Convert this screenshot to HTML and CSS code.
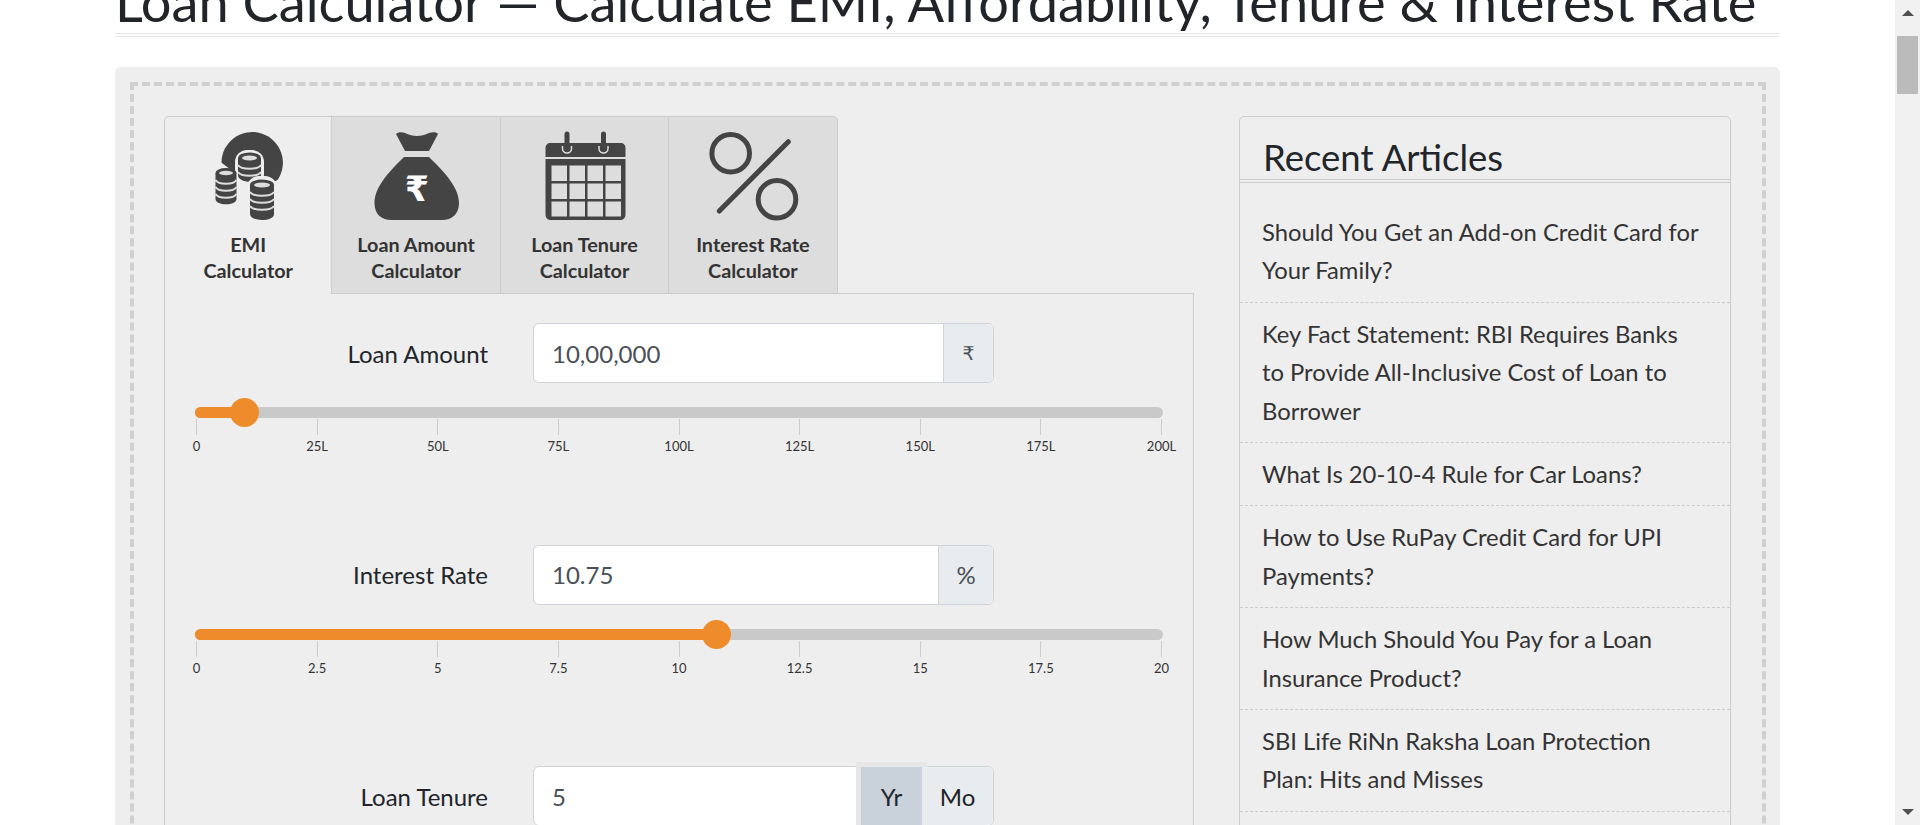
FILE: index.html
```html
<!DOCTYPE html>
<html lang="en">
<head>
    <meta charset="UTF-8">
    <meta name="viewport" content="width=device-width, initial-scale=1.0">
    <title>Loan Calculator</title>
    <link rel="stylesheet" href="styles.css">
</head>
<body>
    <main class="page">
        <div class="container">
            <div class="title-rule">
                <h1 class="page-title">Loan Calculator — Calculate EMI, Affordability, Tenure &amp; Interest Rate</h1>
            </div>

            <section class="panel">
                <div class="panel-inner">
                    <div class="calculator">
                        <ul class="tabs">
                            <li class="tab tab-active">
                                <svg class="tab-icon" viewBox="0 0 88 88">
                                    <path class="icon-fill" d="M17.5 30.7a30.7 30.7 0 1 1 56 17.4L60 55 30 40Z"/>
                                    <g class="coin-stack">
                                        <rect class="coin-halo" x="31" y="18" width="29" height="36" rx="12"/>
                                        <path class="icon-fill" d="M34 26v17c0 9 23 9 23 0V26Z"/>
                                        <ellipse class="icon-fill" cx="45.5" cy="26" rx="11.5" ry="5.5"/>
                                        <ellipse class="coin-top" cx="45.5" cy="26" rx="7.5" ry="2.5"/>
                                        <path class="coin-band" d="M34 33c3 5 20 5 23 0M34 40c3 5 20 5 23 0"/>
                                    </g>
                                    <g class="coin-stack">
                                        <path class="icon-fill" d="M11.5 41v26c0 7 21 7 21 0V41Z"/>
                                        <ellipse class="icon-fill" cx="22" cy="41" rx="10.5" ry="5"/>
                                        <ellipse class="coin-top" cx="22" cy="41" rx="7" ry="2.2"/>
                                        <path class="coin-band" d="M11.5 48c3 5 18 5 21 0M11.5 55c3 5 18 5 21 0M11.5 62c3 5 18 5 21 0"/>
                                    </g>
                                    <g class="coin-stack">
                                        <rect class="coin-halo" x="43" y="44" width="30" height="46" rx="12"/>
                                        <path class="icon-fill" d="M46 53v29c0 8 24 8 24 0V53Z"/>
                                        <ellipse class="icon-fill" cx="58" cy="53" rx="12" ry="5.5"/>
                                        <ellipse class="coin-top" cx="58" cy="53" rx="8" ry="2.4"/>
                                        <path class="coin-band" d="M46 60c3 5 21 5 24 0M46 67c3 5 21 5 24 0M46 74c3 5 21 5 24 0"/>
                                    </g>
                                </svg>
                                <span class="tab-label">EMI<br>Calculator</span>
                            </li>
                            <li class="tab">
                                <svg class="tab-icon" viewBox="0 0 88 88">
                                    <path class="icon-fill" d="M24 2c2-2 6-2 9-1 8 4 16 4 24 0 3-1 8-1 9 1l-9 17H33Z"/>
                                    <path class="icon-fill" d="M32 25h25c13 13 30 29 30 46 0 11-7 17-17 17H20C9 88 2.500 82 2.500 71 2.500 54 19 38 32 25Z"/>
                                    <text class="bag-rupee" x="45" y="69">₹</text>
                                </svg>
                                <span class="tab-label">Loan Amount<br>Calculator</span>
                            </li>
                            <li class="tab">
                                <svg class="tab-icon" viewBox="0 0 88 88">
                                    <path class="icon-fill" d="M5.500 25V16c0-3 2-5 5-5h70c3 0 5 2 5 5v9Z"/>
                                    <path class="icon-fill" fill-rule="evenodd" d="M5.500 27h80v55c0 4-2 6-6 6h-68c-4 0-6-2-6-6ZM11.500 33.500v15.500h15.500v-15.500ZM29.500 33.500v15.500h15.500v-15.500ZM47.500 33.500v15.500h15.500v-15.500ZM65.500 33.500v15.500h15.500v-15.500ZM11.500 51.500v15.500h15.500v-15.500ZM29.500 51.500v15.500h15.500v-15.500ZM47.500 51.500v15.500h15.500v-15.500ZM65.500 51.500v15.500h15.500v-15.500ZM11.500 69.500v15h15.500v-15ZM29.500 69.500v15h15.500v-15ZM47.500 69.500v15h15.500v-15ZM65.500 69.500v15h15.500v-15Z"/>
                                    <path class="ring" d="M22.500 14v2.500a4.500 4.500 0 0 0 9 0V14M59 14v2.500a4.500 4.500 0 0 0 9 0V14"/>
                                    <path class="ring-bar" d="M27 2v14M63.500 2v14"/>
                                </svg>
                                <span class="tab-label">Loan Tenure<br>Calculator</span>
                            </li>
                            <li class="tab">
                                <svg class="tab-icon" viewBox="0 0 88 88">
                                    <circle class="icon-line" cx="21.700" cy="21.300" r="18.800"/>
                                    <circle class="icon-line" cx="68" cy="67.300" r="18.800"/>
                                    <path class="icon-line" d="M79.300 9.700 10.300 79"/>
                                </svg>
                                <span class="tab-label">Interest Rate<br>Calculator</span>
                            </li>
                        </ul>

                        <div class="tab-body">
                            <div class="field">
                                <div class="field-line">
                                    <label class="field-label" for="loan-amount">Loan Amount</label>
                                    <div class="input-group">
                                        <input class="input-text" id="loan-amount" type="text" value="10,00,000">
                                        <span class="addon addon-rupee">₹</span>
                                    </div>
                                </div>
                                <div class="slider">
                                    <div class="track">
                                        <div class="track-fill" style="width: 5%"></div>
                                        <div class="handle" style="left: 5%"></div>
                                    </div>
                                    <div class="ticks">
                                        <span class="tick">0</span>
                                        <span class="tick">25L</span>
                                        <span class="tick">50L</span>
                                        <span class="tick">75L</span>
                                        <span class="tick">100L</span>
                                        <span class="tick">125L</span>
                                        <span class="tick">150L</span>
                                        <span class="tick">175L</span>
                                        <span class="tick">200L</span>
                                    </div>
                                </div>
                            </div>

                            <div class="field">
                                <div class="field-line">
                                    <label class="field-label" for="interest-rate">Interest Rate</label>
                                    <div class="input-group">
                                        <input class="input-text" id="interest-rate" type="text" value="10.75">
                                        <span class="addon addon-percent">%</span>
                                    </div>
                                </div>
                                <div class="slider">
                                    <div class="track">
                                        <div class="track-fill" style="width: 53.75%"></div>
                                        <div class="handle" style="left: 53.75%"></div>
                                    </div>
                                    <div class="ticks">
                                        <span class="tick">0</span>
                                        <span class="tick">2.5</span>
                                        <span class="tick">5</span>
                                        <span class="tick">7.5</span>
                                        <span class="tick">10</span>
                                        <span class="tick">12.5</span>
                                        <span class="tick">15</span>
                                        <span class="tick">17.5</span>
                                        <span class="tick">20</span>
                                    </div>
                                </div>
                            </div>

                            <div class="field">
                                <div class="field-line">
                                    <label class="field-label" for="loan-tenure">Loan Tenure</label>
                                    <div class="input-group">
                                        <input class="input-text" id="loan-tenure" type="text" value="5">
                                        <span class="addon addon-active">Yr</span>
                                        <span class="addon addon-month">Mo</span>
                                    </div>
                                </div>
                            </div>
                        </div>
                    </div>

                    <aside class="articles">
                        <div class="articles-rule">
                            <h3 class="articles-title">Recent Articles</h3>
                        </div>
                        <ul class="article-list">
                            <li class="article">Should You Get an Add-on Credit Card for Your Family?</li>
                            <li class="article">Key Fact Statement: RBI Requires Banks to Provide All-Inclusive Cost of Loan to Borrower</li>
                            <li class="article">What Is 20-10-4 Rule for Car Loans?</li>
                            <li class="article">How to Use RuPay Credit Card for UPI Payments?</li>
                            <li class="article">How Much Should You Pay for a Loan Insurance Product?</li>
                            <li class="article">SBI Life RiNn Raksha Loan Protection Plan: Hits and Misses</li>
                        </ul>
                    </aside>
                </div>
            </section>
        </div>
    </main>

    <div class="scrollbar">
        <span class="scroll-arrow-up"></span>
        <span class="scroll-thumb"></span>
        <span class="scroll-arrow-down"></span>
    </div>
</body>
</html>
```

FILE: styles.css
```css
* {
    box-sizing: border-box;
}
body {
    margin: 0;
    height: 825px;
    display: flex;
    overflow: hidden;
    font-family: Lato, "Noto Sans", sans-serif;
    color: #212529;
    background-color: #ffffff;
}
.page {
    flex: 1;
    height: 825px;
    overflow: hidden;
}
.container {
    width: 1665px;
    margin: 0 auto;
}

/* heading is cut off by the top of the window, page is scrolled */
.title-rule {
    margin-top: -36px;
    padding-bottom: 2px;
    border-bottom: 1px solid #e6e6e6;
}
.page-title {
    margin: 0;
    height: 70px;
    font-size: 54.2px;
    font-weight: 400;
    line-height: 75px;
    white-space: nowrap;
    border-bottom: 1px solid #e6e6e6;
}
.panel {
    margin-top: 30px;
    padding: 15px 14px 15px 15px;
    background-color: #eeeeee;
    border-radius: 6px;
}
.panel-inner {
    display: flex;
    gap: 45px;
    padding: 30px 30px 30px 30px;
    border: 4px dashed #d0d0d0;
}

/* tabs */
.calculator {
    width: 1030px;
}
.tabs {
    display: flex;
    margin: 0;
    padding: 0;
    list-style: none;
}
.tab {
    width: 168.4px;
    height: 178px;
    padding-top: 15px;
    text-align: center;
    background-color: #dddddd;
    border: 1px solid #cccccc;
    border-left: none;
}
.tab:last-child {
    border-top-right-radius: 5px;
}
.tab-active {
    background-color: #eeeeee;
    border-left: 1px solid #cccccc;
    border-bottom: none;
    border-top-left-radius: 5px;
}
.tab-icon {
    display: block;
    width: 88px;
    height: 88px;
    margin: 0 auto 11px;
    overflow: visible;
}
.tab-label {
    display: block;
    font-size: 19.8px;
    font-weight: 700;
    line-height: 26px;
    color: #333333;
}
.icon-fill {
    fill: #444444;
}
.icon-line {
    fill: none;
    stroke: #444444;
    stroke-width: 5;
    stroke-linecap: round;
}
.coin-halo {
    fill: #eeeeee;
}
.coin-top {
    fill: #dddddd;
}
.coin-band {
    fill: none;
    stroke: #dddddd;
    stroke-width: 2;
}
.bag-rupee {
    font-family: "DejaVu Sans", sans-serif;
    font-size: 35px;
    font-weight: 700;
    fill: #ffffff;
    text-anchor: middle;
}
.ring {
    fill: none;
    stroke: #dddddd;
    stroke-width: 1.5;
}
.ring-bar {
    fill: none;
    stroke: #444444;
    stroke-width: 5;
    stroke-linecap: round;
}

/* form */
.tab-body {
    margin-top: -1px;
    padding: 29px 30px 30px 30px;
    border: 1px solid #cccccc;
    border-bottom: none;
}
.field {
    height: 221.5px;
}
.field-line {
    display: flex;
    align-items: center;
}
.field-label {
    width: 293px;
    margin-right: 45px;
    font-size: 24px;
    text-align: right;
}
.input-group {
    display: flex;
    width: 461px;
    height: 60px;
    background-color: #ffffff;
    border: 1px solid #ced4da;
    border-radius: 6px;
}
.input-text {
    flex: 1;
    min-width: 0;
    padding: 0 18px;
    font-family: inherit;
    font-size: 24px;
    color: #495057;
    background: transparent;
    border: none;
    border-radius: 6px 0 0 6px;
}
.addon {
    display: flex;
    align-items: center;
    justify-content: center;
    font-size: 24px;
    color: #495057;
    background-color: #e9ecef;
    border-left: 1px solid #ced4da;
    border-radius: 0 6px 6px 0;
}
.addon-rupee {
    width: 50px;
    font-family: "DejaVu Sans", sans-serif;
    font-size: 19px;
}
.addon-percent {
    width: 55px;
}
.addon-active {
    width: 61px;
    color: #212529;
    background-color: #c9d2da;
    border-left: none;
    border-radius: 0;
    box-shadow: 0 0 0 5px #e6e6e6;
}
.addon-month {
    position: relative;
    width: 71px;
    color: #212529;
    border-left: none;
}

/* slider */
.slider {
    margin-top: 24px;
}
.track {
    position: relative;
    height: 11px;
    background-color: #c9c9c9;
    border-radius: 6px;
}
.track-fill {
    height: 100%;
    background-color: #ee8c2c;
    border-radius: 6px 0 0 6px;
}
.handle {
    position: absolute;
    top: -9px;
    width: 29px;
    height: 29px;
    margin-left: -13.5px;
    background-color: #ee8c2c;
    border-radius: 50%;
}
.ticks {
    display: flex;
    justify-content: space-between;
    padding: 0 1px;
}
.tick {
    display: flex;
    flex-direction: column;
    align-items: center;
    width: 1px;
    padding-top: 20px;
    position: relative;
    font-size: 13px;
    line-height: 16px;
    color: #333333;
    white-space: nowrap;
}
.tick::before {
    content: "";
    position: absolute;
    top: 1px;
    width: 1px;
    height: 16px;
    background-color: #cccccc;
}

/* sidebar */
.articles {
    width: 492px;
    background-color: #eeeeee;
    border: 1px solid #cccccc;
    border-radius: 5px;
}
.articles-rule {
    padding-bottom: 2px;
    border-bottom: 1px solid #cccccc;
}
.articles-title {
    height: 63px;
    margin: 0;
    padding: 20px 0 0 23px;
    font-size: 36.5px;
    font-weight: 400;
    line-height: 40px;
    border-bottom: 1px solid #cccccc;
}
.article-list {
    margin: 18px 0 0;
    padding: 0;
    list-style: none;
}
.article {
    padding: 12px 28px 12px 22px;
    font-size: 23.8px;
    line-height: 38.4px;
    color: #333333;
    border-bottom: 1px dashed #cccccc;
}

/* window scrollbar */
.scrollbar {
    display: flex;
    flex-direction: column;
    align-items: center;
    width: 25px;
    height: 825px;
    padding: 10px 2px 10px;
    background-color: #f1f1f1;
}
.scroll-arrow-up {
    width: 0;
    height: 0;
    border-left: 6px solid transparent;
    border-right: 6px solid transparent;
    border-bottom: 6px solid #505050;
}
.scroll-thumb {
    width: 21px;
    height: 58px;
    margin-top: 20px;
    background-color: #bbbbbb;
}
.scroll-arrow-down {
    width: 0;
    height: 0;
    margin-top: auto;
    border-left: 6px solid transparent;
    border-right: 6px solid transparent;
    border-top: 6px solid #505050;
}
```
